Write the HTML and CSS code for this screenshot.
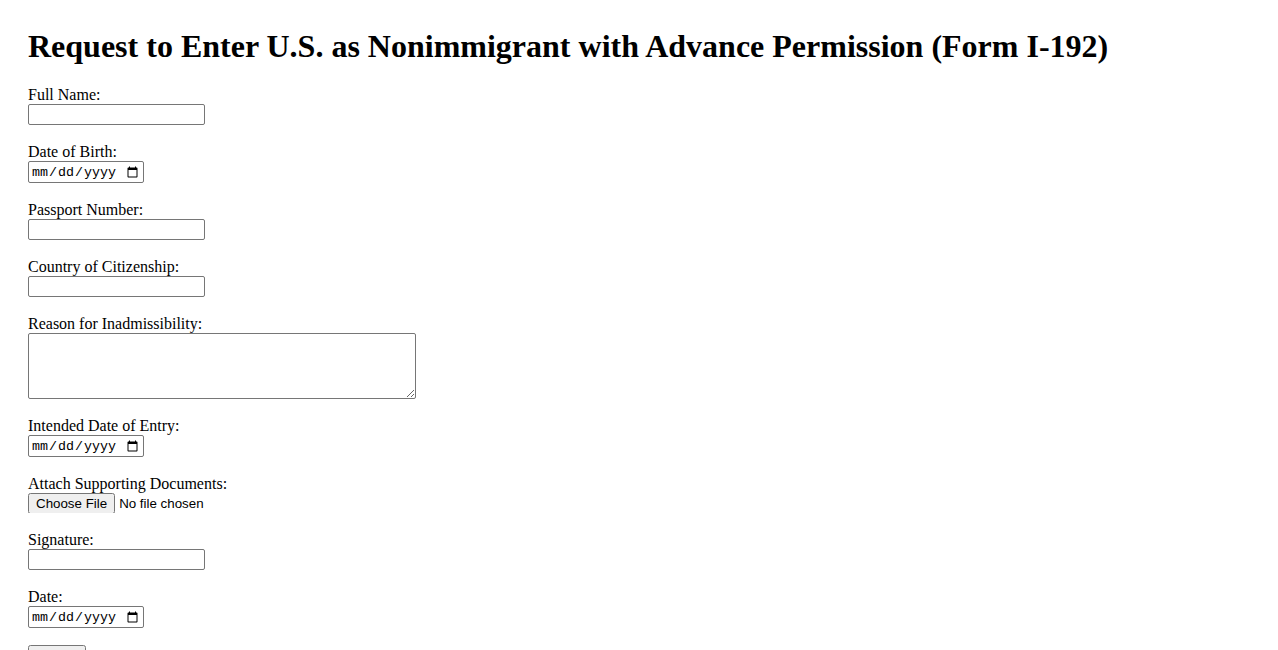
FILE: index.html
```html
<!DOCTYPE html>
<html lang="en">
<head>
    <meta charset="UTF-8">
    <title>Form I-192</title>
    <link rel="stylesheet" href="styles.css">
</head>
<body>

    <h1>Request to Enter U.S. as Nonimmigrant with Advance Permission (Form I-192)</h1>

    <form class="i192-form">
        <div class="field">
            <label for="fullName">Full Name:</label>
            <input type="text" id="fullName" class="text-input">
        </div>

        <div class="field">
            <label for="dob">Date of Birth:</label>
            <input type="date" id="dob" class="date-input">
        </div>

        <div class="field">
            <label for="passport">Passport Number:</label>
            <input type="text" id="passport" class="text-input">
        </div>

        <div class="field">
            <label for="citizenship">Country of Citizenship:</label>
            <input type="text" id="citizenship" class="text-input">
        </div>

        <div class="field">
            <label for="reason">Reason for Inadmissibility:</label>
            <textarea id="reason" class="text-area"></textarea>
        </div>

        <div class="field">
            <label for="entryDate">Intended Date of Entry:</label>
            <input type="date" id="entryDate" class="date-input">
        </div>

        <div class="field">
            <label for="docs">Attach Supporting Documents:</label>
            <input type="file" id="docs" class="file-input">
        </div>

        <div class="field">
            <label for="signature">Signature:</label>
            <input type="text" id="signature" class="text-input">
        </div>

        <div class="field">
            <label for="signDate">Date:</label>
            <input type="date" id="signDate" class="date-input">
        </div>

        <input type="submit" value="Submit" class="submit-btn">
    </form>

</body>
</html>
```

FILE: styles.css
```css
/* General */
body {
    font-family: "Liberation Serif", "Times New Roman", serif;
    font-size: 16px;
    color: #000;
    background: #fff;
    margin: 8px;
    padding: 20px;
}

h1 {
    font-size: 32px;
    line-height: 37px;
    font-weight: bold;
    margin: 0 0 20px;
}

/* Form fields */
.field {
    margin-bottom: 17px;
}

.field label {
    display: block;
    line-height: 19px;
}

.field input,
.field textarea,
.submit-btn {
    display: block;
    box-sizing: border-box;
    margin: 0;
    font-family: "Liberation Sans", Arial, sans-serif;
    font-size: 13.333px;
}

.text-input {
    width: 177px;
    height: 21px;
    padding: 1px 2px;
    border: 1px solid #767676;
    border-radius: 2px;
}

.date-input {
    width: 116px;
    height: 22px;
    padding: 2px 2px 0;
    border: 1px solid #767676;
    border-radius: 2px;
    font-family: "Liberation Mono", "DejaVu Sans Mono", monospace !important;
}

.text-area {
    width: 388px;
    height: 66px;
    padding: 2px;
    border: 1px solid #767676;
    border-radius: 2px;
    resize: both;
}

.file-input {
    height: 20px;
}

.submit-btn {
    width: 58px;
    height: 21px;
}
```
